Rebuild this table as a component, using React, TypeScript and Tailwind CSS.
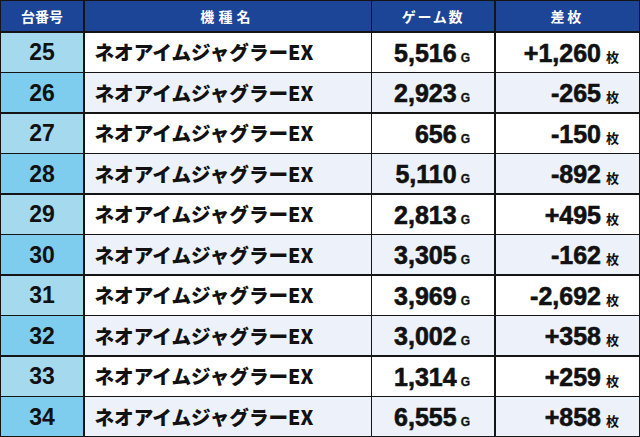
import React from "react";

type Row = { no: number; name: string; games: string; diff: string };

const rows: Row[] = [
  { no: 25, name: "ネオアイムジャグラーEX", games: "5,516", diff: "+1,260" },
  { no: 26, name: "ネオアイムジャグラーEX", games: "2,923", diff: "-265" },
  { no: 27, name: "ネオアイムジャグラーEX", games: "656", diff: "-150" },
  { no: 28, name: "ネオアイムジャグラーEX", games: "5,110", diff: "-892" },
  { no: 29, name: "ネオアイムジャグラーEX", games: "2,813", diff: "+495" },
  { no: 30, name: "ネオアイムジャグラーEX", games: "3,305", diff: "-162" },
  { no: 31, name: "ネオアイムジャグラーEX", games: "3,969", diff: "-2,692" },
  { no: 32, name: "ネオアイムジャグラーEX", games: "3,002", diff: "+358" },
  { no: 33, name: "ネオアイムジャグラーEX", games: "1,314", diff: "+259" },
  { no: 34, name: "ネオアイムジャグラーEX", games: "6,555", diff: "+858" },
];

const jp = "font-['Noto_Sans_CJK_JP','Noto_Sans',sans-serif]";
const num = "font-['Liberation_Sans','Noto_Sans_CJK_JP',sans-serif]";

export default function App() {
  return (
    <div className="w-[640px] h-[437px] bg-[#151515] p-[1px] grid gap-[1.5px] grid-cols-[82px_286px_122px_1fr] grid-rows-[30px_repeat(10,1fr)]">
      {/* header */}
      <div className={`bg-[#1c4497] text-white text-[14px] font-bold flex items-center justify-center ${jp}`}>台番号</div>
      <div className={`bg-[#1c4497] text-white text-[14px] font-bold flex items-center justify-center tracking-[0.3em] ${jp}`}>機種名</div>
      <div className={`bg-[#1c4497] text-white text-[14px] font-bold flex items-center justify-center tracking-[0.12em] ${jp}`}>ゲーム数</div>
      <div className={`bg-[#1c4497] text-white text-[14px] font-bold flex items-center justify-center tracking-[0.2em] ${jp}`}>差枚</div>

      {rows.map((r, i) => {
        const even = i % 2 === 1;
        const cell = even ? "bg-[#edf2fa]" : "bg-white";
        return (
          <React.Fragment key={r.no}>
            <div
              className={`${even ? "bg-[#7fcdee]" : "bg-[#a5d9ee]"} flex items-center justify-center pt-[1px] text-[23px] font-bold text-[#111] ${num}`}
            >
              {r.no}
            </div>
            <div className={`${cell} flex items-center pl-[10px] text-[19.6px] font-black text-[#111] ${jp}`}>
              {r.name}
            </div>
            <div className={`${cell} flex items-baseline justify-end pt-[5px] pr-[24px] text-[#111] ${num}`}>
              <span className="text-[25px] font-bold leading-[30px] [-webkit-text-stroke:0.6px_#111]">{r.games}</span>
              <span className="text-[12px] font-bold ml-[4px] [-webkit-text-stroke:0.3px_#111]">G</span>
            </div>
            <div className={`${cell} flex items-baseline justify-end pt-[5px] pr-[20px] text-[#111] ${num}`}>
              <span className="text-[25px] font-bold leading-[30px] [-webkit-text-stroke:0.6px_#111]">{r.diff}</span>
              <span className={`text-[13px] font-bold ml-[5px] ${jp}`}>枚</span>
            </div>
          </React.Fragment>
        );
      })}
    </div>
  );
}
